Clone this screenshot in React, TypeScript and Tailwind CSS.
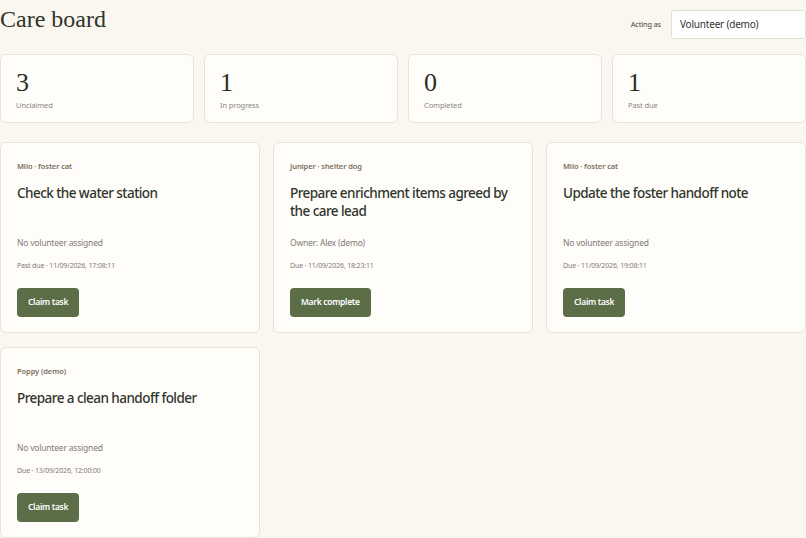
import React from "react";

const stats = [
  { n: "3", label: "Unclaimed" },
  { n: "1", label: "In progress" },
  { n: "0", label: "Completed" },
  { n: "1", label: "Past due" },
];

const tasks = [
  {
    cat: "Milo · foster cat",
    title: "Check the water station",
    owner: "No volunteer assigned",
    due: "Past due · 11/09/2026, 17:08:11",
    action: "Claim task",
  },
  {
    cat: "Juniper · shelter dog",
    title: "Prepare enrichment items agreed by the care lead",
    owner: "Owner: Alex (demo)",
    due: "Due · 11/09/2026, 18:23:11",
    action: "Mark complete",
  },
  {
    cat: "Milo · foster cat",
    title: "Update the foster handoff note",
    owner: "No volunteer assigned",
    due: "Due · 11/09/2026, 19:08:11",
    action: "Claim task",
  },
  {
    cat: "Poppy (demo)",
    title: "Prepare a clean handoff folder",
    owner: "No volunteer assigned",
    due: "Due · 13/09/2026, 12:00:00",
    action: "Claim task",
  },
];

export default function App() {
  return (
    <div
      className="min-h-screen bg-[#faf6f0] text-[#2f352c]"
      style={{ fontFamily: '"Noto Sans", "Open Sans", sans-serif' }}
    >
      <div className="flex items-start justify-between">
        <h1
          className="mt-[4px] text-[24px] leading-[30px] font-normal text-[#2e3529]"
          style={{ fontFamily: '"Liberation Serif", "DejaVu Serif", serif' }}
        >
          Care board
        </h1>
        <div className="mt-[10px] flex items-center gap-[10px]">
          <span className="text-[7.5px] tracking-[-0.2px] text-[#4b4b45]">Acting as</span>
          <div className="flex h-[29px] w-[135px] items-center rounded-[3px] border border-[#e3ddd2] bg-white pl-[8px] text-[10px] tracking-[-0.2px] text-[#333]">
            Volunteer (demo)
          </div>
        </div>
      </div>

      <div className="mt-[15px] grid grid-cols-4 gap-[10px]">
        {stats.map((s, i) => (
          <div
            key={i}
            className="h-[69px] rounded-[6px] border border-[#e9e2d6] bg-[#fffdf9] px-[15px] pt-[14px]"
          >
            <div
              className="text-[26px] leading-[28px] text-[#2a2e27]"
              style={{ fontFamily: '"Liberation Serif", "DejaVu Serif", serif' }}
            >
              {s.n}
            </div>
            <div className="mt-[3px] text-[7.5px] leading-[10px] tracking-[-0.1px] text-[#8b8781]">
              {s.label}
            </div>
          </div>
        ))}
      </div>

      <div className="mt-[19px] grid grid-cols-3 gap-x-[13px] gap-y-[14px]">
        {tasks.map((t, i) => (
          <div
            key={i}
            className="h-[191px] rounded-[6px] border border-[#e9e2d6] bg-[#fffdf9] px-[16px] pt-[18px]"
          >
            <div className="text-[7.5px] font-semibold leading-[10px] tracking-[-0.1px] text-[#7b705f]">
              {t.cat}
            </div>
            <div className="mt-[13px] h-[36px] text-[13.5px] font-medium leading-[18px] tracking-[-0.55px] text-[#2f352c]">
              {t.title}
            </div>
            <div className="mt-[17px] text-[8.5px] leading-[12px] tracking-[-0.2px] text-[#7f7b74]">
              {t.owner}
            </div>
            <div className="mt-[12px] text-[7px] leading-[10px] tracking-[-0.15px] text-[#7f7b74]">
              {t.due}
            </div>
            <button className="mt-[17px] h-[29px] rounded-[4px] bg-[#5b6e47] px-[11px] text-[8.5px] font-semibold tracking-[-0.3px] text-white">
              {t.action}
            </button>
          </div>
        ))}
      </div>
    </div>
  );
}
